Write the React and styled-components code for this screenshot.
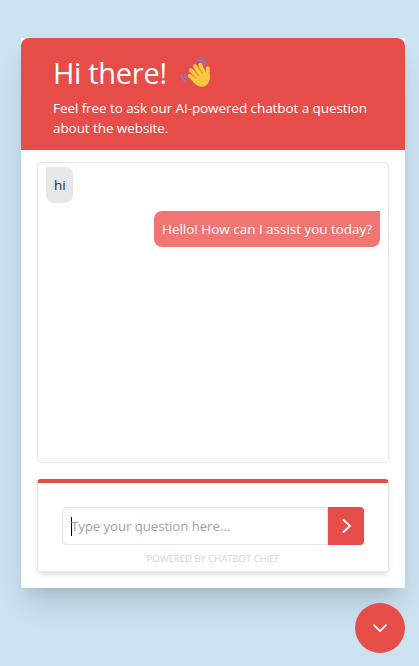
import React from 'react';
import styled, { createGlobalStyle } from 'styled-components';

const red = '#e64d48';

const GlobalStyle = createGlobalStyle`
    * {
        box-sizing: border-box;
    }

    body {
        margin: 0;
        background: #cbe2f1;
        font-family: "Open Sans", "Noto Sans", sans-serif;
        overflow: hidden;
    }
`;

const Page = styled.div`
    display: flex;
    flex-direction: column;
    align-items: flex-end;
    height: 666px;
    padding: 38px 14px 0 21px;
`;

const Frame = styled.div`
    width: 384px;
    height: 550px;
    background: #f4f5f6;
    box-shadow: 0 20px 28px -6px rgba(0, 0, 0, 0.14), 0 8px 12px -5px rgba(0, 0, 0, 0.08);
`;

const Panel = styled.div`
    height: 550px;
    background: #fff;
    border-radius: 0 0 8px 8px;
`;

const Header = styled.div`
    height: 112px;
    padding: 15px 32px 0;
    background: ${red};
    border-radius: 8px 8px 0 0;
    color: #fff;
`;

const Title = styled.div`
    display: flex;
    align-items: center;
    height: 40px;
    font-size: 29px;
    line-height: 40px;
    white-space: pre;
    letter-spacing: -0.3px;

    svg {
        margin: 2px 0 0 13px;
    }
`;

const Subtitle = styled.div`
    margin-top: 5px;
    font-size: 13.5px;
    line-height: 20px;
    letter-spacing: -0.08px;
    white-space: nowrap;
`;

const Body = styled.div`
    display: flex;
    flex-direction: column;
    gap: 16px;
    padding: 12px 16px;
`;

const Messages = styled.div`
    display: flex;
    flex-direction: column;
    align-items: flex-start;
    gap: 8px;
    height: 301px;
    padding: 4px 8px;
    border: 1px solid #e5e7eb;
    border-radius: 4px;
`;

const Bubble = styled.div`
    align-self: ${({ $reply }) => ($reply ? 'flex-end' : 'flex-start')};
    width: ${({ $reply }) => ($reply ? '226px' : '27px')};
    height: 36px;
    padding: 8px;
    border-radius: ${({ $reply }) => ($reply ? '8px 0 8px 8px' : '0 8px 8px 8px')};
    background: ${({ $reply }) => ($reply ? '#f07573' : '#e5e7eb')};
    color: ${({ $reply }) => ($reply ? '#fff' : '#111c44')};
    font-size: 13.5px;
    line-height: 20px;
    letter-spacing: -0.03px;
    white-space: nowrap;
`;

const QuestionCard = styled.div`
    height: 93px;
    padding: 24px 24px 0;
    border: 1px solid #e5e7eb;
    border-top: 4px solid ${red};
    border-radius: 4px;
    box-shadow: 0 4px 6px -1px rgba(0, 0, 0, 0.1), 0 2px 4px -2px rgba(0, 0, 0, 0.1);
`;

const InputRow = styled.div`
    display: flex;
    height: 38px;
`;

const Field = styled.div`
    display: flex;
    align-items: center;
    flex: 1;
    padding-left: 8px;
    border: 1px solid #e5e7eb;
    border-radius: 4px 0 0 4px;
    box-shadow: inset 0 2px 4px rgba(0, 0, 0, 0.06);
    color: #9ca3af;
    font-size: 13.3px;
    letter-spacing: -0.1px;
`;

const Caret = styled.span`
    width: 1px;
    height: 19px;
    margin-right: -1px;
    background: #000;
`;

const SendButton = styled.button`
    display: flex;
    align-items: center;
    justify-content: center;
    width: 36px;
    padding: 0;
    border: 0;
    border-radius: 0 4px 4px 0;
    background: ${red};
`;

const Powered = styled.div`
    margin-top: 6px;
    color: #d1d5db;
    font-size: 9.7px;
    line-height: 16px;
    letter-spacing: -0.11px;
    text-align: center;
`;

const ToggleButton = styled.button`
    display: flex;
    align-items: center;
    justify-content: center;
    width: 50px;
    height: 50px;
    margin-top: 15px;
    padding: 0;
    border: 0;
    border-radius: 50%;
    background: ${red};
`;

const WavingHand = () => (
    <svg width="34" height="34" viewBox="0 0 34 34" fill="none" strokeLinecap="round">
        <g stroke="#f9c846" strokeWidth="4">
            <path d="M9.8 18.8l9 8" />
            <path d="M10.8 13.2l10 10" />
            <path d="M15 9.2l8 11" />
            <path d="M20.2 7.8l4.5 10" />
            <path d="M27.8 11.2l-.3 11" />
        </g>
        <path
            d="M13 18l8.5-6.5 4.5 5 3.5 1.5c.4 2.6.2 5-.8 7.2-1.4 3.2-4.6 5.1-8 4.5-3.2-.5-5.6-3-8-5z"
            fill="#f9c846"
        />
        <g stroke="#e48b23" strokeWidth="1.1">
            <path d="M11.6 17.4l4.2 3.8" />
            <path d="M13.8 12.7l4.9 5.6" />
            <path d="M18.2 10l3.8 5.8" />
        </g>
        <g stroke="#7187dc" strokeWidth="1.1">
            <path d="M1.5 17.8c.2 3.6 1.8 6.1 5 7.2" />
            <path d="M4.1 17.4c.2 2.4 1.2 4 3.2 5" />
            <path d="M18 3.4c3-.3 5 1 6 4" />
            <path d="M19.5 1c3.8.1 6 2 6.7 5.6" />
        </g>
    </svg>
);

const Chevron = ({ size, d, width }) => (
    <svg width={size} height={size} viewBox="0 0 20 20" fill="none" stroke="#fff" strokeWidth={width} strokeLinecap="round" strokeLinejoin="round">
        <path d={d} />
    </svg>
);

const App = () => (
    <>
        <GlobalStyle />
        <Page>
            <Frame>
                <Panel>
                    <Header>
                        <Title>Hi there!<WavingHand /></Title>
                        <Subtitle>
                            Feel free to ask our AI-powered chatbot a question<br />
                            about the website.
                        </Subtitle>
                    </Header>
                    <Body>
                        <Messages>
                            <Bubble>hi</Bubble>
                            <Bubble $reply>Hello! How can I assist you today?</Bubble>
                        </Messages>
                        <QuestionCard>
                            <InputRow>
                                <Field><Caret />Type your question here...</Field>
                                <SendButton>
                                    <Chevron size={20} width={1.9} d="M7.5 4l6.5 6-6.5 6" />
                                </SendButton>
                            </InputRow>
                            <Powered>POWERED BY CHATBOT CHIEF</Powered>
                        </QuestionCard>
                    </Body>
                </Panel>
            </Frame>
            <ToggleButton>
                <Chevron size={20} width={1.7} d="M4 7.2l6 6 6-6" />
            </ToggleButton>
        </Page>
    </>
);

export default App;
